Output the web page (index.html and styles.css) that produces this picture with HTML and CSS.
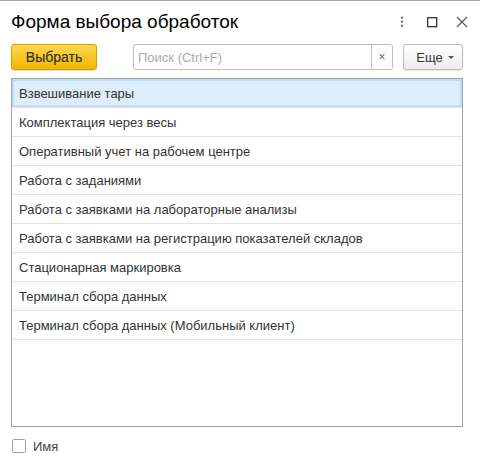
FILE: index.html
```html
<!DOCTYPE html>
<html lang="ru">
<head>
<meta charset="utf-8">
<link rel="stylesheet" href="styles.css">
</head>
<body>
<div class="window">
  <div class="header">
    <div class="title">Форма выбора обработок</div>
    <div class="win-icons">
      <svg class="ic" width="12" height="12" viewBox="0 0 12 12"><circle cx="4" cy="1.8" r="1.2" fill="#777"/><circle cx="4" cy="5.8" r="1.2" fill="#777"/><circle cx="4" cy="9.8" r="1.2" fill="#777"/></svg>
      <svg class="ic" width="12" height="12" viewBox="0 0 12 12"><rect x="0.7" y="1.7" width="9" height="9" fill="none" stroke="#333" stroke-width="1.3"/></svg>
      <svg class="ic" width="12" height="12" viewBox="0 0 12 12"><path d="M1 1 L11 11 M11 1 L1 11" stroke="#555" stroke-width="1.1" fill="none"/></svg>
    </div>
  </div>
  <div class="toolbar">
    <button class="btn-primary">Выбрать</button>
    <div class="search">
      <span class="placeholder">Поиск (Ctrl+F)</span>
      <span class="clear">×</span>
    </div>
    <button class="btn-more">Еще <span class="caret"></span></button>
  </div>
  <div class="list">
    <div class="row selected">Взвешивание тары</div>
    <div class="row">Комплектация через весы</div>
    <div class="row">Оперативный учет на рабочем центре</div>
    <div class="row">Работа с заданиями</div>
    <div class="row">Работа с заявками на лабораторные анализы</div>
    <div class="row">Работа с заявками на регистрацию показателей складов</div>
    <div class="row">Стационарная маркировка</div>
    <div class="row">Терминал сбора данных</div>
    <div class="row">Терминал сбора данных (Мобильный клиент)</div>
  </div>
  <div class="footer">
    <span class="checkbox"></span>
    <span class="cb-label">Имя</span>
  </div>
</div>
</body>
</html>
```
FILE: styles.css
```css
* { box-sizing: border-box; }
html, body { margin: 0; padding: 0; background: #fff; }
body { font-family: "Liberation Sans", Arial, sans-serif; color: #333; }
.window { width: 480px; height: 466px; border-top: 1px solid #a8a8a8; }
.header { height: 38px; display: flex; align-items: center; padding: 0 11px; }
.title { font-size: 19px; color: #000; flex: 1; padding-top: 4px; }
.win-icons { display: flex; align-items: center; gap: 17px; margin-right: 1px; padding-top: 4px; }
.ic { display: block; }
.toolbar { display: flex; align-items: center; padding: 5px 0 0 11px; height: 31px; }
.btn-primary {
  width: 86px; height: 26px; border: 1px solid #d9a100; border-radius: 3px;
  background: linear-gradient(#fbd84e, #f3b600);
  font-family: inherit; font-size: 14px; color: #333; padding: 0;
  box-shadow: 0 1px 1px rgba(0,0,0,0.15);
  -webkit-text-stroke: 0.2px #333;
}
.search {
  margin-left: 36px; width: 260px; height: 26px; border: 1px solid #bdbdbd; border-radius: 3px;
  display: flex; align-items: center;
}
.placeholder { flex: 1; padding-left: 4px; font-size: 13px; color: #aaa; }
.clear { width: 21px; height: 24px; border-left: 1px solid #c8c8c8; display: flex; align-items: center; justify-content: center; font-size: 12px; color: #666; }
.btn-more {
  margin-left: 10px; width: 60px; height: 26px; border: 1px solid #bbb; border-radius: 3px;
  background: linear-gradient(#fff, #eee); font-family: inherit; font-size: 13px; color: #333;
  padding: 0 0 0 4px; display: flex; align-items: center; justify-content: center; gap: 5px;
  box-shadow: 0 1px 1px rgba(0,0,0,0.1);
}
.caret { width: 0; height: 0; border-left: 3px solid transparent; border-right: 3px solid transparent; border-top: 3px solid #555; }
.list { margin: 8px 0 0 11px; width: 452px; height: 349px; border: 1px solid #a3a3a3; }
.row {
  height: 29px; border-bottom: 1px solid #e4e4e4; padding: 1px 0 0 7px;
  display: flex; align-items: center; font-size: 13px; color: #333;
}
.row.selected { background: #ddedfb; border: 2px solid #bfdcf6; border-bottom: 2px solid #bfdcf6; padding: 1px 0 0 5px; box-shadow: 0 1px 0 #e4e4e4; height: 28px; margin-bottom: 1px; }
.footer { display: flex; align-items: center; padding: 11px 0 0 12px; }
.checkbox { width: 14px; height: 14px; border: 1px solid #a0a0a0; border-radius: 2px; }
.cb-label { margin-left: 7px; font-size: 13px; color: #444; padding-top: 1px; }
```
